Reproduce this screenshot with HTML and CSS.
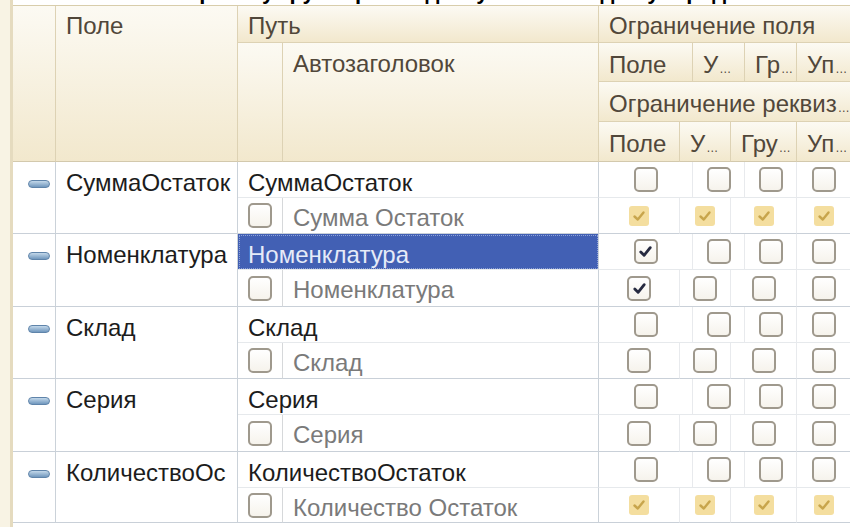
FILE: index.html
```html
<!DOCTYPE html>
<html lang="ru">
<head>
<meta charset="utf-8">
<title>Ограничение полей</title>
<link rel="stylesheet" href="styles.css">
</head>
<body>
<div class="page">
  <div class="strip"></div>
  <div class="main">
    <div class="topline"><span>Настроим у группировок доступ к полям для упорядочивания</span></div>

    <div class="thead">
      <div class="h h-icon"></div>
      <div class="h h-field">Поле</div>
      <div class="h h-path">Путь</div>
      <div class="h h-fr">Ограничение поля</div>
      <div class="h h-pcb"></div>
      <div class="h h-auto">Автозаголовок</div>
      <div class="h h-f1">Поле</div>
      <div class="h h-f2">У<span class="el">…</span></div>
      <div class="h h-f3">Гр<span class="el">…</span></div>
      <div class="h h-f4 h-last">Уп<span class="el">…</span></div>
      <div class="h h-ar h-last">Ограничение реквиз<span class="el">…</span></div>
      <div class="h h-a1">Поле</div>
      <div class="h h-a2">У<span class="el">…</span></div>
      <div class="h h-a3">Гру<span class="el">…</span></div>
      <div class="h h-a4 h-last">Уп<span class="el">…</span></div>
    </div>

    <div class="tbody">
      <!-- СуммаОстаток -->
      <div class="ic"><span class="pill"></span></div>
      <div class="nm">СуммаОстаток</div>
      <div class="pt">СуммаОстаток</div>
      <div class="ck s2 r1"><span class="cb"></span></div>
      <div class="ck s2 r1"><span class="cb"></span></div>
      <div class="ck r1"><span class="cb"></span></div>
      <div class="ck r1 last"><span class="cb"></span></div>
      <div class="pc"><span class="cb"></span></div>
      <div class="at">Сумма Остаток</div>
      <div class="ck r2"><span class="cby"><svg viewBox="0 0 18 18"><path d="M4.5 9.5 L7.8 12.5 L13.5 5.5" /></svg></span></div>
      <div class="ck s2 r2"><span class="cby"><svg viewBox="0 0 18 18"><path d="M4.5 9.5 L7.8 12.5 L13.5 5.5" /></svg></span></div>
      <div class="ck s2 r2"><span class="cby"><svg viewBox="0 0 18 18"><path d="M4.5 9.5 L7.8 12.5 L13.5 5.5" /></svg></span></div>
      <div class="ck r2 last"><span class="cby"><svg viewBox="0 0 18 18"><path d="M4.5 9.5 L7.8 12.5 L13.5 5.5" /></svg></span></div>

      <!-- Номенклатура -->
      <div class="ic"><span class="pill"></span></div>
      <div class="nm">Номенклатура</div>
      <div class="pt sel">Номенклатура</div>
      <div class="ck s2 r1"><span class="cb on"><svg viewBox="0 0 18 20"><path d="M4 10.5 L7.5 14 L14 6" /></svg></span></div>
      <div class="ck s2 r1"><span class="cb"></span></div>
      <div class="ck r1"><span class="cb"></span></div>
      <div class="ck r1 last"><span class="cb"></span></div>
      <div class="pc"><span class="cb"></span></div>
      <div class="at">Номенклатура</div>
      <div class="ck r2"><span class="cb on"><svg viewBox="0 0 18 20"><path d="M4 10.5 L7.5 14 L14 6" /></svg></span></div>
      <div class="ck s2 r2"><span class="cb"></span></div>
      <div class="ck s2 r2"><span class="cb"></span></div>
      <div class="ck r2 last"><span class="cb"></span></div>

      <!-- Склад -->
      <div class="ic"><span class="pill"></span></div>
      <div class="nm">Склад</div>
      <div class="pt">Склад</div>
      <div class="ck s2 r1"><span class="cb"></span></div>
      <div class="ck s2 r1"><span class="cb"></span></div>
      <div class="ck r1"><span class="cb"></span></div>
      <div class="ck r1 last"><span class="cb"></span></div>
      <div class="pc"><span class="cb"></span></div>
      <div class="at">Склад</div>
      <div class="ck r2"><span class="cb"></span></div>
      <div class="ck s2 r2"><span class="cb"></span></div>
      <div class="ck s2 r2"><span class="cb"></span></div>
      <div class="ck r2 last"><span class="cb"></span></div>

      <!-- Серия -->
      <div class="ic"><span class="pill"></span></div>
      <div class="nm">Серия</div>
      <div class="pt">Серия</div>
      <div class="ck s2 r1"><span class="cb"></span></div>
      <div class="ck s2 r1"><span class="cb"></span></div>
      <div class="ck r1"><span class="cb"></span></div>
      <div class="ck r1 last"><span class="cb"></span></div>
      <div class="pc"><span class="cb"></span></div>
      <div class="at">Серия</div>
      <div class="ck r2"><span class="cb"></span></div>
      <div class="ck s2 r2"><span class="cb"></span></div>
      <div class="ck s2 r2"><span class="cb"></span></div>
      <div class="ck r2 last"><span class="cb"></span></div>

      <!-- КоличествоОстаток -->
      <div class="ic"><span class="pill"></span></div>
      <div class="nm">КоличествоОс</div>
      <div class="pt">КоличествоОстаток</div>
      <div class="ck s2 r1"><span class="cb"></span></div>
      <div class="ck s2 r1"><span class="cb"></span></div>
      <div class="ck r1"><span class="cb"></span></div>
      <div class="ck r1 last"><span class="cb"></span></div>
      <div class="pc"><span class="cb"></span></div>
      <div class="at">Количество Остаток</div>
      <div class="ck r2"><span class="cby"><svg viewBox="0 0 18 18"><path d="M4.5 9.5 L7.8 12.5 L13.5 5.5" /></svg></span></div>
      <div class="ck s2 r2"><span class="cby"><svg viewBox="0 0 18 18"><path d="M4.5 9.5 L7.8 12.5 L13.5 5.5" /></svg></span></div>
      <div class="ck s2 r2"><span class="cby"><svg viewBox="0 0 18 18"><path d="M4.5 9.5 L7.8 12.5 L13.5 5.5" /></svg></span></div>
      <div class="ck r2 last"><span class="cby"><svg viewBox="0 0 18 18"><path d="M4.5 9.5 L7.8 12.5 L13.5 5.5" /></svg></span></div>
    </div>
  </div>
</div>
</body>
</html>
```
FILE: styles.css
```css
* { box-sizing: border-box; }
html, body { margin: 0; padding: 0; background: #fff; }
body {
  font-family: "Liberation Sans", Arial, sans-serif;
  font-size: 24px;
  line-height: 28px;
  color: #1c1c1c;
}
.page {
  display: flex;
  min-height: 527px;
}
.strip {
  width: 13px;
  flex: none;
  background: #f8f3e4;
  border-right: 3px solid #e5dbbf;
}
.main {
  flex: 1;
  min-width: 0;
}
.topline {
  height: 5px;
  overflow: hidden;
}
.topline span {
  display: block;
  font-weight: bold;
  font-size: 22px;
  line-height: 22px;
  margin-top: -19px;
  padding-left: 135px;
  color: #000;
  white-space: nowrap;
}

/* ---------- header ---------- */
.thead, .tbody {
  display: grid;
  grid-template-columns: 43px 182px 45px 316px 81px 13px 38px 14px 52px 53px;
  width: 837px;
}
.thead {
  grid-template-rows: 37px 39px 40px 40px;
  border-top: 1px solid #d8cdab;
}
.h {
  background: linear-gradient(#fcfaf3, #f2e8cd);
  border-right: 1px solid #ddd2b4;
  border-bottom: 1px solid #ddd2b4;
  color: #51473a;
  padding: 6px 6px 0 10px;
  white-space: nowrap;
  overflow: hidden;
}
.el {
  font-size: 12px;
  letter-spacing: -1px;
  margin-left: 1px;
}
.h-last { border-right: none; }
.h-icon { grid-column: 1; grid-row: 1 / span 4; border-bottom-color: #d3c9ad; }
.h-field { grid-column: 2; grid-row: 1 / span 4; border-bottom-color: #d3c9ad; }
.h-path { grid-column: 3 / span 2; grid-row: 1; }
.h-fr { grid-column: 5 / span 6; grid-row: 1; border-right: none; }
.h-pcb { grid-column: 3; grid-row: 2 / span 3; border-bottom-color: #d3c9ad; }
.h-auto { grid-column: 4; grid-row: 2 / span 3; padding-top: 7px; border-bottom-color: #d3c9ad; }
.h-f1 { grid-column: 5 / span 2; grid-row: 2; padding-top: 8px; }
.h-f2 { grid-column: 7 / span 2; grid-row: 2; padding-top: 8px; }
.h-f3 { grid-column: 9; grid-row: 2; padding-top: 8px; }
.h-f4 { grid-column: 10; grid-row: 2; padding-top: 8px; }
.h-ar { grid-column: 5 / span 6; grid-row: 3; padding-top: 8px; }
.h-a1 { grid-column: 5; grid-row: 4; padding-top: 8px; border-bottom-color: #d3c9ad; }
.h-a2 { grid-column: 6 / span 2; grid-row: 4; padding-top: 8px; border-bottom-color: #d3c9ad; }
.h-a3 { grid-column: 8 / span 2; grid-row: 4; padding-top: 8px; border-bottom-color: #d3c9ad; }
.h-a4 { grid-column: 10; grid-row: 4; padding-top: 8px; border-bottom-color: #d3c9ad; }

/* ---------- body ---------- */
.tbody {
  grid-template-rows: 36px 36px 36px 37px 36px 36px 36px 37px 36px 35px;
}
.ic, .nm {
  grid-row: span 2;
  border-right: 1px solid #cbd2d9;
  border-bottom: 1px solid #c9d0d8;
}
.ic {
  display: flex;
  align-items: flex-start;
  padding: 18px 0 0 15px;
}
.pill {
  display: block;
  width: 22px;
  height: 8px;
  border-radius: 4px;
  background: linear-gradient(#c3d8ea, #7097bd);
  border: 1px solid #5f84aa;
}
.nm {
  padding: 7px 10px 0 10px;
  white-space: nowrap;
  overflow: hidden;
}
.pt {
  grid-column: span 2;
  padding: 7px 10px 0 10px;
  border-right: 1px solid #cbd2d9;
  border-bottom: 1px solid #e6e9ec;
  white-space: nowrap;
  overflow: hidden;
}
.pt.sel {
  background: #4260b4;
  color: #e6ebf8;
  outline: 1px dotted #8ea2d6;
  outline-offset: -2px;
}
.pc {
  display: flex;
  align-items: center;
  justify-content: center;
  border-right: 1px solid #d6d8da;
  border-bottom: 1px solid #c9d0d8;
}
.at {
  padding: 6px 10px 0 10px;
  color: #7a7a7a;
  border-right: 1px solid #cbd2d9;
  border-bottom: 1px solid #c9d0d8;
  white-space: nowrap;
  overflow: hidden;
}
.ck {
  display: flex;
  align-items: center;
  justify-content: center;
  border-right: 1px solid #e8eaed;
}
.ck.s2 { grid-column: span 2; }
.ck.r1 { border-bottom: 1px solid #e6e9ec; }
.ck.r2 { border-bottom: 1px solid #c9d0d8; }
.ck.last { border-right: none; }

.cb {
  display: flex;
  align-items: center;
  justify-content: center;
  width: 24px;
  height: 25px;
  border: 2px solid #9f998d;
  border-radius: 5px;
  background: linear-gradient(#ffffff, #f6f3ec);
}
.cb svg {
  width: 17px;
  height: 19px;
}
.cb svg path {
  fill: none;
  stroke: #262a40;
  stroke-width: 3;
  stroke-linecap: round;
  stroke-linejoin: round;
}
.cby {
  display: flex;
  align-items: center;
  justify-content: center;
  width: 20px;
  height: 20px;
  border-radius: 3px;
  background: #f4de9f;
}
.cby svg {
  width: 18px;
  height: 18px;
}
.cby svg path {
  fill: none;
  stroke: #c8a54c;
  stroke-width: 2.4;
  stroke-linecap: round;
  stroke-linejoin: round;
}
```
